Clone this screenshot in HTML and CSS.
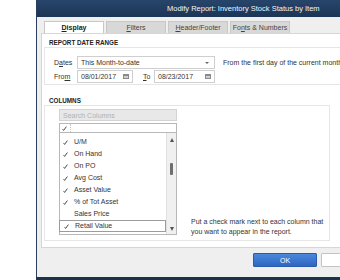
FILE: index.html
```html
<!DOCTYPE html>
<html lang="en">
<head>
<meta charset="utf-8" />
<title>Modify Report</title>
<link rel="stylesheet" href="styles.css">
</head>
<body>

<div class="dialog">
    <div class="titlebar">Modify Report: Inventory Stock Status by Item</div>

    <div class="tabs">
        <div class="tab active"><u>D</u>isplay</div>
        <div class="tab"><u>F</u>ilters</div>
        <div class="tab"><u>H</u>eader/Footer</div>
        <div class="tab">Fo<u>n</u>ts &amp; Numbers</div>
    </div>

    <div class="panel">
        <div class="legend">REPORT DATE RANGE</div>
        <div class="group dates">
            <div class="row">
                <label class="lbl">D<u>a</u>tes</label>
                <div class="field select">This Month-to-date<span class="arrow"></span></div>
                <span class="hint">From the first day of the current month</span>
            </div>
            <div class="row">
                <label class="lbl">Fro<u>m</u></label>
                <div class="field date">08/01/2017
                    <svg class="cal" width="6" height="5" viewBox="0 0 6 5"><rect width="6" height="5" fill="#8a8a8a"/><rect x="1" y="2" width="4" height="2" fill="#cfcfcf"/></svg>
                </div>
                <label class="lbl to"><u>T</u>o</label>
                <div class="field date wide">08/23/2017
                    <svg class="cal" width="6" height="5" viewBox="0 0 6 5"><rect width="6" height="5" fill="#8a8a8a"/><rect x="1" y="2" width="4" height="2" fill="#cfcfcf"/></svg>
                </div>
            </div>
        </div>

        <div class="legend cols">COLUMNS</div>
        <div class="group columns">
            <div class="picker">
                <div class="search">Search Columns</div>
                <div class="list-head">
                    <span class="chk"><svg width="5" height="5" viewBox="0 0 5 5"><path d="M0.6 3.2 L1.6 4.4 L4.4 0.6" fill="none" stroke="#333" stroke-width="0.9"/></svg></span>
                </div>
                <div class="list">
                    <div class="rows">
                        <div class="item"><span class="chk"><svg width="5" height="5" viewBox="0 0 5 5"><path d="M0.6 3.2 L1.6 4.4 L4.4 0.6" fill="none" stroke="#333" stroke-width="0.9"/></svg></span>U/M</div>
                        <div class="item"><span class="chk"><svg width="5" height="5" viewBox="0 0 5 5"><path d="M0.6 3.2 L1.6 4.4 L4.4 0.6" fill="none" stroke="#333" stroke-width="0.9"/></svg></span>On Hand</div>
                        <div class="item"><span class="chk"><svg width="5" height="5" viewBox="0 0 5 5"><path d="M0.6 3.2 L1.6 4.4 L4.4 0.6" fill="none" stroke="#333" stroke-width="0.9"/></svg></span>On PO</div>
                        <div class="item"><span class="chk"><svg width="5" height="5" viewBox="0 0 5 5"><path d="M0.6 3.2 L1.6 4.4 L4.4 0.6" fill="none" stroke="#333" stroke-width="0.9"/></svg></span>Avg Cost</div>
                        <div class="item"><span class="chk"><svg width="5" height="5" viewBox="0 0 5 5"><path d="M0.6 3.2 L1.6 4.4 L4.4 0.6" fill="none" stroke="#333" stroke-width="0.9"/></svg></span>Asset Value</div>
                        <div class="item"><span class="chk"><svg width="5" height="5" viewBox="0 0 5 5"><path d="M0.6 3.2 L1.6 4.4 L4.4 0.6" fill="none" stroke="#333" stroke-width="0.9"/></svg></span>% of Tot Asset</div>
                        <div class="item"><span class="chk"></span>Sales Price</div>
                        <div class="item selected"><span class="chk"><svg width="5" height="5" viewBox="0 0 5 5"><path d="M0.6 3.2 L1.6 4.4 L4.4 0.6" fill="none" stroke="#333" stroke-width="0.9"/></svg></span>Retail Value</div>
                    </div>
                    <div class="scrollbar">
                        <span class="up"></span>
                        <span class="thumb"></span>
                        <span class="down"></span>
                    </div>
                </div>
            </div>
            <p class="help">Put a check mark next to each column that<br>you want to appear in the report.</p>
        </div>
    </div>

    <div class="footer">
        <button class="btn ok">OK</button>
        <button class="btn cancel">Cancel</button>
    </div>
</div>

</body>
</html>
```
FILE: styles.css
```css
body {
    margin: 0;
    width: 340px;
    height: 280px;
    overflow: hidden;
    background: #fff;
    font-family: "Liberation Sans", Arial, sans-serif;
    font-size: 7px;
    color: #333;
}

.dialog {
    margin-left: 36px;
    width: 420px;
    height: 277px;
    background: #efefef;
    border-left: 1px solid #2a3f5c;
    border-bottom: 3px solid #1f324c;
}

.titlebar {
    height: 17px;
    line-height: 17px;
    padding-left: 130px;
    background: linear-gradient(#27456b, #1c3556);
    color: #f2f5f9;
    font-size: 7.5px;
}

.tabs {
    display: flex;
    gap: 2px;
    padding: 4px 0 0 7px;
}

.tab {
    box-sizing: border-box;
    width: 60px;
    height: 12px;
    line-height: 11px;
    text-align: center;
    background: #d8d8d8;
    border: 1px solid #c8c8c8;
    border-bottom: none;
    color: #444;
}

.tab.active {
    background: #fff;
    color: #222;
    font-weight: bold;
}

.panel {
    box-sizing: border-box;
    height: 215px;
    margin-left: 4px;
    padding: 5px 0 0 2px;
    background: #fff;
    border: 1px solid #d6d6d6;
}

.legend {
    height: 8px;
    line-height: 8px;
    padding-left: 5px;
    font-size: 6.3px;
    font-weight: bold;
    color: #222;
}

.legend.cols {
    margin-top: 12px;
}

.group {
    box-sizing: border-box;
    border: 1px solid #e6e6e6;
}

.group.dates {
    height: 38px;
    padding: 8px 0 0 9px;
}

.row {
    display: flex;
    align-items: center;
    height: 13px;
    margin-bottom: 1px;
}

.lbl {
    width: 23px;
    color: #333;
}

.lbl.to {
    width: 11px;
    margin-left: 10px;
}

.field {
    box-sizing: border-box;
    display: flex;
    align-items: center;
    justify-content: space-between;
    height: 13px;
    padding: 0 3px;
    border: 1px solid #cfcfcf;
    background: #fff;
    color: #333;
}

.select {
    width: 138px;
}

.arrow {
    width: 0;
    height: 0;
    margin-right: 2px;
    border-left: 2px solid transparent;
    border-right: 2px solid transparent;
    border-top: 2px solid #666;
}

.date {
    width: 56px;
}

.date.wide {
    width: 61px;
}

.hint {
    margin-left: 8px;
    white-space: nowrap;
}

.group.columns {
    display: flex;
    align-items: flex-start;
    width: 286px;
    height: 136px;
    padding: 3px 0 0 14px;
}

.picker {
    width: 118px;
}

.search {
    box-sizing: border-box;
    height: 12px;
    line-height: 11px;
    padding-left: 3px;
    margin-bottom: 2px;
    background: #e8e8e8;
    border: 1px solid #d3d3d3;
    color: #b0b0b0;
}

.list-head {
    box-sizing: border-box;
    display: flex;
    height: 10px;
    border: 1px solid #b8b8b8;
    background: #fff;
}

.chk {
    display: flex;
    align-items: center;
    box-sizing: border-box;
    width: 11px;
    padding-left: 2px;
}

.list-head .chk {
    border-right: 1px dotted #c8c8c8;
}

.list {
    display: flex;
    height: 101px;
    border: 1px solid #b8b8b8;
    border-top: none;
}

.rows {
    flex: 1;
    padding-top: 3px;
}

.item {
    display: flex;
    box-sizing: border-box;
    height: 12px;
    line-height: 12px;
    color: #333;
}

.item .chk {
    width: 14px;
    padding-left: 3px;
}

.item.selected {
    line-height: 10px;
    border: 1px solid #9c9c9c;
    margin-left: -1px;
}

.item.selected .chk {
    padding-left: 4px;
    width: 15px;
}

.scrollbar {
    display: flex;
    flex-direction: column;
    align-items: center;
    width: 9px;
    background: #f0f0f0;
    border-left: 1px solid #e0e0e0;
}

.up,
.down {
    width: 0;
    height: 0;
    border-left: 2px solid transparent;
    border-right: 2px solid transparent;
}

.up {
    margin-top: 5px;
    border-bottom: 4px solid #555;
}

.thumb {
    width: 3px;
    height: 12px;
    margin-top: 21px;
    border-radius: 1px;
    background: #6e6e6e;
}

.down {
    margin-top: auto;
    margin-bottom: 3px;
    border-top: 4px solid #555;
}

.help {
    margin: 108px 0 0 14px;
    line-height: 10px;
    color: #333;
}

.footer {
    display: flex;
    gap: 4px;
    padding: 5px 0 0 216px;
}

.btn {
    box-sizing: border-box;
    height: 14px;
    width: 64px;
    padding: 0;
    font-family: inherit;
    font-size: 7px;
    border-radius: 1px;
}

.btn.ok {
    background: linear-gradient(#4a88dc, #2f66c0);
    border: 1px solid #2a5cae;
    color: #fff;
}

.btn.cancel {
    background: #fff;
    border: 1px solid #c4c4c4;
    color: #333;
}
```
